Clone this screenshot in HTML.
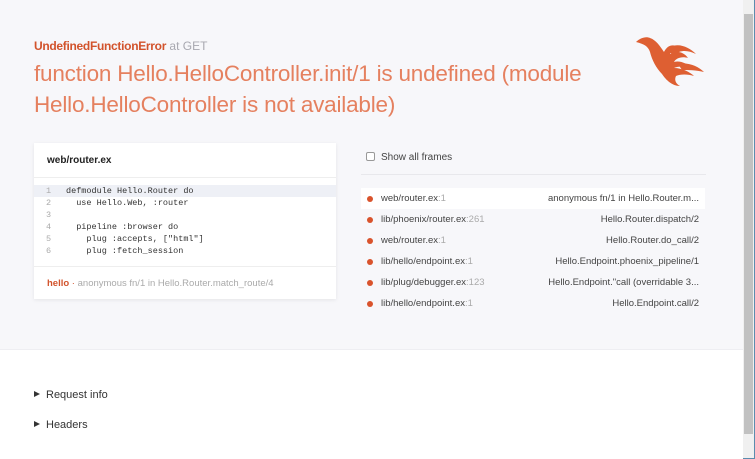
<!DOCTYPE html>
<html><head><meta charset="utf-8"><style>
*{margin:0;padding:0;box-sizing:border-box}
body{width:755px;height:459px;overflow:hidden;font-family:"Liberation Sans",sans-serif;background:#fff;position:relative;color:#333}
.top{position:absolute;left:0;top:0;width:743px;height:350px;background:#f7f7fa;border-bottom:1px solid #eeeef2}
.ex{position:absolute;left:34px;top:39px;font-size:12px;color:#d2532c}
.ex b{font-weight:bold;letter-spacing:-0.3px}
.ex span{color:#a8a8b0}
.msg{position:absolute;left:34px;top:58px;font-size:22.5px;line-height:31px;color:#e5805f;letter-spacing:-0.2px;width:580px}
.card{position:absolute;left:34px;top:143px;width:302px;height:156px;background:#fff;box-shadow:0 1px 4px rgba(0,0,0,.08)}
.card .h{height:35px;border-bottom:1px solid #eee;font-size:10px;font-weight:bold;padding:12px 13px;color:#222}
.code{padding-top:7px;font-family:"Liberation Mono",monospace;font-size:8.5px;color:#333}
.code div{height:12px;line-height:12px;white-space:pre}
.code div.hl{background:#eef0f6}
.code i{font-style:normal;color:#aaa;display:inline-block;width:32px;padding-left:12px}
.foot{position:absolute;left:0;top:123px;width:100%;border-top:1px solid #eee;padding:11px 13px;font-size:9.5px;color:#aaa}
.foot b{color:#d2532c}
.chk{position:absolute;left:366px;top:152px;font-size:10px;color:#444}
.chk span{display:inline-block;width:9px;height:9px;border:1px solid #999;border-radius:2px;background:#fff;vertical-align:-1px;margin-right:6px}
.sep{position:absolute;left:361px;top:174px;width:345px;border-top:1px solid #e8e8ec}
.fr{position:absolute;left:361px;width:344px;height:21px;font-size:9.5px;color:#444;line-height:21px}
.fr.a{background:#fff}
.fr .d{position:absolute;left:6px;top:8px;width:6px;height:6px;border-radius:50%;background:#d9532c}
.fr .l{position:absolute;left:20px}
.fr .l span{color:#aaa}
.fr .r{position:absolute;right:6px}
.det{position:absolute;left:34px;font-size:11px;color:#333}
.det:before{content:"";display:inline-block;border-left:6px solid #333;border-top:3.5px solid transparent;border-bottom:3.5px solid transparent;margin-right:6px;vertical-align:1px}
.sb{position:absolute;left:743px;top:0;width:12px;height:459px;background:#f0f0f0;border-right:1px solid #5b8cae;border-bottom:1px solid #5b8cae}
.sb .t{position:absolute;left:1px;top:14px;width:9px;height:420px;background:#c1c1c1}
</style></head><body>
<div class="top">
<div class="ex"><b>UndefinedFunctionError</b> <span>at GET</span></div>
<div class="msg">function Hello.HelloController.init/1 is undefined (module Hello.HelloController is not available)</div>
<svg style="position:absolute;left:634px;top:34px" width="74" height="52" viewBox="0 0 74 52"><g fill="#de5f32">
<path d="M2 8 C6 4 12 2 16 4 C22 6 26 12 30 18 C34 10 40 10 46 14 C40 14 36 16 36 20 C42 16 50 18 54 24 C48 22 42 24 40 28 C46 26 54 30 58 34 C52 32 44 32 40 34 C48 34 56 38 60 42 C54 40 46 40 42 42 C40 46 42 50 46 52 C38 52 32 46 28 40 C22 34 18 26 16 18 C14 12 10 10 2 8Z"/>
<path d="M30 18 C40 6 54 12 62 20 C54 16 46 16 42 20Z"/>
<path d="M44 30 C54 28 64 32 70 38 C62 36 54 36 48 36Z"/>
</g></svg>
<div class="card">
<div class="h">web/router.ex</div>
<div class="code">
<div class="hl"><i>1</i>defmodule Hello.Router do</div>
<div><i>2</i>  use Hello.Web, :router</div>
<div><i>3</i></div>
<div><i>4</i>  pipeline :browser do</div>
<div><i>5</i>    plug :accepts, ["html"]</div>
<div><i>6</i>    plug :fetch_session</div>
</div>
<div class="foot"><b>hello</b><b style="font-weight:normal"> · </b>anonymous fn/1 in Hello.Router.match_route/4</div>
</div>
<div class="chk"><span></span>Show all frames</div>
<div class="sep"></div>
<div class="fr a" style="top:188px"><i class="d"></i><div class="l">web/router.ex<span>:1</span></div><div class="r">anonymous fn/1 in Hello.Router.m...</div></div>
<div class="fr" style="top:209px"><i class="d"></i><div class="l">lib/phoenix/router.ex<span>:261</span></div><div class="r">Hello.Router.dispatch/2</div></div>
<div class="fr" style="top:230px"><i class="d"></i><div class="l">web/router.ex<span>:1</span></div><div class="r">Hello.Router.do_call/2</div></div>
<div class="fr" style="top:251px"><i class="d"></i><div class="l">lib/hello/endpoint.ex<span>:1</span></div><div class="r">Hello.Endpoint.phoenix_pipeline/1</div></div>
<div class="fr" style="top:272px"><i class="d"></i><div class="l">lib/plug/debugger.ex<span>:123</span></div><div class="r">Hello.Endpoint."call (overridable 3...</div></div>
<div class="fr" style="top:293px"><i class="d"></i><div class="l">lib/hello/endpoint.ex<span>:1</span></div><div class="r">Hello.Endpoint.call/2</div></div>
</div>
<div class="det" style="top:389px">Request info</div>
<div class="det" style="top:419px">Headers</div>
<div class="sb"><div class="t"></div></div>
</body></html>
